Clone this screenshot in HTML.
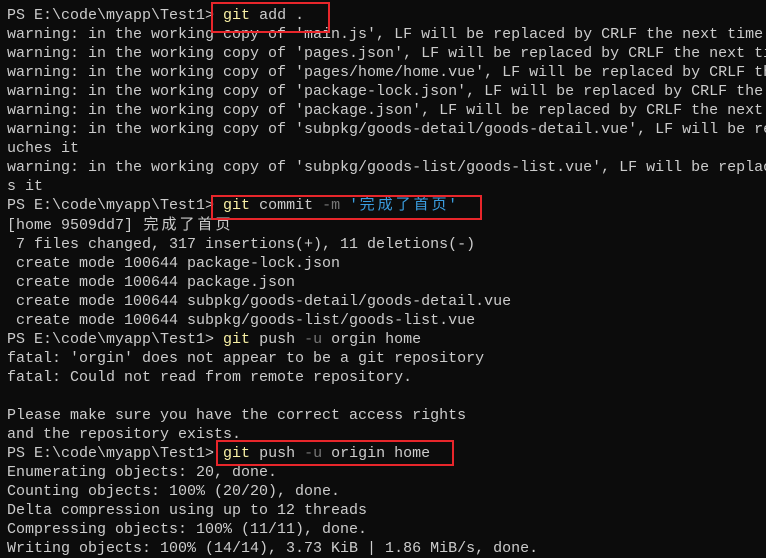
<!DOCTYPE html>
<html><head><meta charset="utf-8"><style>
html,body{margin:0;padding:0;background:#0c0c0c;width:766px;height:557px;overflow:hidden}
pre{position:absolute;left:7px;top:6px;margin:0;font-family:"Liberation Mono","Noto Sans CJK SC",monospace;font-size:15px;line-height:19.04px;color:#cccccc;white-space:pre}
.y{color:#f9f1a5}.g{color:#767676}.b{color:#3b9ee0}
.c{display:inline-block;width:18px;text-align:center}
.box{position:absolute;border:2px solid #e8262b;box-sizing:border-box}
</style></head><body>
<pre>PS E:\code\myapp\Test1&gt; <span class="y">git</span> add .
warning: in the working copy of 'main.js', LF will be replaced by CRLF the next time
warning: in the working copy of 'pages.json', LF will be replaced by CRLF the next ti
warning: in the working copy of 'pages/home/home.vue', LF will be replaced by CRLF th
warning: in the working copy of 'package-lock.json', LF will be replaced by CRLF the
warning: in the working copy of 'package.json', LF will be replaced by CRLF the next
warning: in the working copy of 'subpkg/goods-detail/goods-detail.vue', LF will be re
uches it
warning: in the working copy of 'subpkg/goods-list/goods-list.vue', LF will be replac
s it
PS E:\code\myapp\Test1&gt; <span class="y">git</span> commit <span class="g">-m</span> <span class="b">'<span class="c">完</span><span class="c">成</span><span class="c">了</span><span class="c">首</span><span class="c">页</span>'</span>
[home 9509dd7] <span class="c">完</span><span class="c">成</span><span class="c">了</span><span class="c">首</span><span class="c">页</span>
 7 files changed, 317 insertions(+), 11 deletions(-)
 create mode 100644 package-lock.json
 create mode 100644 package.json
 create mode 100644 subpkg/goods-detail/goods-detail.vue
 create mode 100644 subpkg/goods-list/goods-list.vue
PS E:\code\myapp\Test1&gt; <span class="y">git</span> push <span class="g">-u</span> orgin home
fatal: 'orgin' does not appear to be a git repository
fatal: Could not read from remote repository.

Please make sure you have the correct access rights
and the repository exists.
PS E:\code\myapp\Test1&gt; <span class="y">git</span> push <span class="g">-u</span> origin home
Enumerating objects: 20, done.
Counting objects: 100% (20/20), done.
Delta compression using up to 12 threads
Compressing objects: 100% (11/11), done.
Writing objects: 100% (14/14), 3.73 KiB | 1.86 MiB/s, done.
</pre>
<div class="box" style="left:211px;top:2px;width:119px;height:31px"></div>
<div class="box" style="left:211px;top:195px;width:271px;height:25px"></div>
<div class="box" style="left:216px;top:440px;width:238px;height:26px"></div>
</body></html>
